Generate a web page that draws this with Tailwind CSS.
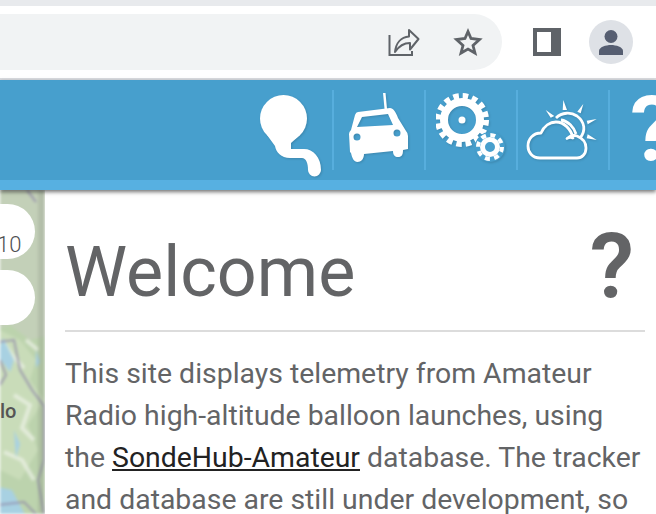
<!DOCTYPE html>
<html lang="en">
<head>
<meta charset="UTF-8">
<title>SondeHub Amateur</title>
<script src="https://cdn.jsdelivr.net/npm/@tailwindcss/browser@4"></script>
</head>
<body class="w-[656px] h-[514px] overflow-hidden bg-white font-['Roboto',sans-serif]">

<!-- Browser chrome -->
<div class="h-[6px] bg-[#e8eaed]"></div>
<div class="h-[72px] bg-white flex items-center">
  <div class="w-[502px] h-[56px] bg-[#f1f3f4] rounded-r-[28px] flex items-center justify-end pr-[19px] gap-[33px]">
    <svg class="w-[32px] h-[30px]" viewBox="388 27 32 30" fill="none" stroke="#5f6368" stroke-width="2"><path d="M389.500 35V55H412V51"/><path d="M395 52C396 43 401 37 409 36.500V30L418.500 39L410 49.500V43C404 43 399 46 395 52Z" stroke-linejoin="round"/></svg>
    <svg class="w-[30px] h-[30px]" viewBox="452.500 27 30 30" fill="none" stroke="#5f6368" stroke-width="2.800"><path d="M467.500 31.500L470.500 38.500L479 39.500L472.500 45.500L474.500 53L467.500 49L460.500 53L462.500 45.500L456 39.500L464.500 38.500Z"/></svg>
  </div>
  <div class="ml-[31px] w-[28px] h-[28px] border-[4px] border-r-[10px] border-[#5f6368] bg-white"></div>
  <div class="ml-[28px] w-[44px] h-[44px] rounded-full bg-[#dee1e6] flex items-center justify-center">
    <svg class="w-[26px] h-[26px]" viewBox="0 0 26 26" fill="#565e71"><circle cx="13" cy="7.500" r="6.500"/><path d="M1 26V22C1 18 8 16 13 16C18 16 25 18 25 22V26Z"/></svg>
  </div>
</div>
<div class="h-[2px] bg-[#dadce0]"></div>

<!-- Site header -->
<div class="relative z-10 shadow-[0_2px_4px_rgba(0,0,0,0.55)]">
  <div class="h-[100px] bg-[#479fcd] flex justify-end overflow-hidden">
    <div class="w-[92px] h-[100px] flex justify-end pr-[7px]">
      <svg class="w-[70px] h-[84px] mt-[13px] drop-shadow-[1px_1px_1px_rgba(0,0,0,0.15)]" viewBox="255 93 70 84" fill="#fff"><circle cx="283.500" cy="118.500" r="23.500"/><path d="M267 135L275 146C276 152 281 158 290 158H302C306 158 308 163 308 170A6.500 6.500 0 0 0 321 170C321 157 313 149 304 149H291V143L300 135Z"/></svg>
    </div>
    <div class="w-[2px] h-[80px] mt-[10px] bg-[#57aedd]"></div>
    <div class="w-[90px] h-[100px] flex pl-[11px]">
      <svg class="w-[66px] h-[75px] mt-[10px] drop-shadow-[1px_1px_1px_rgba(0,0,0,0.15)]" viewBox="345 90 66 75" fill="#fff"><path d="M383 93H385.500L387 109H384.500Z"/><path fill-rule="evenodd" d="M358 112L390 108C393 108 396 112 398 118L406 131Q408 133 408 136V149L403 150C403 156 401 157 398 157C395 157 393 155 393 151L364 154C364 159 361 162 357.500 162C354 162 352 158 351 153L350 152L349 134Q349 132 351 130L355 115Q356 112 358 112ZM362 117L357 127L393 125L388 114ZM353.500 137A3.500 3.500 0 1 0 360.500 137A3.500 3.500 0 1 0 353.500 137ZM393.500 133A3.500 3.500 0 1 0 400.500 133A3.500 3.500 0 1 0 393.500 133Z"/></svg>
    </div>
    <div class="w-[2px] h-[80px] mt-[10px] bg-[#57aedd]"></div>
    <div class="w-[90px] h-[100px] flex justify-center">
      <svg class="w-[70px] h-[70px] mt-[12px] drop-shadow-[1px_1px_1px_rgba(0,0,0,0.15)]" viewBox="0 0 70 70" fill="none" stroke="#fff">
        <circle cx="26" cy="28" r="18" stroke-width="8"/>
        <circle cx="26" cy="28" r="24" stroke-width="6" stroke-dasharray="5.500 3.925"/>
        <circle cx="26" cy="28" r="3.500" fill="#fff" stroke="none"/>
        <circle cx="54" cy="55" r="15" fill="#479fcd" stroke="none"/>
        <circle cx="54" cy="55" r="7.500" stroke-width="5"/>
        <circle cx="54" cy="55" r="12" stroke-width="4" stroke-dasharray="5 4.420"/>
      </svg>
    </div>
    <div class="w-[2px] h-[80px] mt-[10px] bg-[#57aedd]"></div>
    <div class="w-[90px] h-[100px] flex justify-center">
      <svg class="w-[80px] h-[70px] mt-[15px] drop-shadow-[1px_1px_1px_rgba(0,0,0,0.15)]" viewBox="523 95 80 70" fill="none" stroke="#fff" stroke-width="2.800">
        <path d="M540 158C532 158 528 152 528 146C528 139 533 133 541 133C544 126 550 122 556 122C564 122 571 129 573 138C571 137 569 137 567 138.500C570 136 574 135 577 136C582 138 586 142 586 148C586 154 582 158 577 158Z" stroke-linejoin="round"/>
        <path d="M556 118C562 112 571 112 577 116C585 122 586 131 580 138M561 120C568 121 574 127 576 134"/>
        <path d="M545.700 110L554.300 116L550.700 117.700ZM563.300 100L567 110L562.700 110ZM583.300 104L580.700 113.300L577.300 111.700ZM596.700 119L587.700 124.300L586.700 120.700ZM596.700 140L586.700 138.300L587.700 134.300Z" fill="#fff" stroke="none"/>
      </svg>
    </div>
    <div class="w-[2px] h-[80px] mt-[10px] bg-[#57aedd]"></div>
    <div class="w-[46px] h-[100px] overflow-hidden pl-[20px] pt-[2px]">
      <span class="block font-semibold text-[90px] leading-[96px] text-white">?</span>
    </div>
  </div>
  <div class="h-[10px] bg-[#57b0e1]"></div>
</div>

<!-- Page -->
<div class="flex h-[324px]">
  <div class="relative w-[45px] h-[324px] overflow-hidden shrink-0">
    <svg class="absolute inset-0 blur-[1.500px]" width="45" height="324" viewBox="0 0 45 324">
      <rect x="-5" y="-5" width="55" height="334" fill="#bcd3ad"/>
      <path d="M-5 -5H50V145L30 150L10 135L-5 140Z" fill="#c3d0b8"/>
      <path d="M0 140L20 150L36 170L30 190L44 210L28 235L38 260L20 290L0 280Z" fill="#c9dcb9"/>
      <path d="M2 150L12 165L24 178M14 205L30 215L22 238L34 250M4 262L22 270L34 290M26 150L38 160" fill="none" stroke="#eef2e8" stroke-width="4" opacity="0.700"/>
      <path d="M3 148L14 170L10 182L-3 165ZM-5 296L12 300L28 330H-5ZM14 240L20 254L16 268ZM36 160L40 172L36 178Z" fill="#a8d1e2"/>
      <path d="M27 0L36 12M-3 152L14 150L20 180L32 200L44 216L44 270L38 290L44 324M-3 315L24 312L36 324M0 170L6 185L0 195" fill="none" stroke="#8f88a8" stroke-width="1.500"/>
      <rect x="38" y="-5" width="12" height="334" fill="#555" opacity="0.150"/>
    </svg>
    <div class="absolute left-[-47px] top-[14px] w-[82px] h-[55px] rounded-full bg-white pl-[44px] pt-[26px] text-[22px] leading-[30px] font-light text-[#4f5052]">10</div>
    <div class="absolute left-[-47px] top-[80px] w-[82px] h-[55px] rounded-full bg-white"></div>
    <span class="absolute left-0 top-[209px] text-[20px] leading-[24px] font-medium text-[#555]">lo</span>
  </div>
  <div class="flex-1 bg-white pl-[20px] pr-[11px] text-[#636466]">
    <div class="h-[142px] border-b-2 border-[#dcdcdc] flex justify-between items-start">
      <h1 class="text-[70px] leading-[84px] mt-[40px] font-normal">Welcome</h1>
      <span class="font-semibold text-[90px] leading-[100px] mt-[27px] mr-[11px]">?</span>
    </div>
    <p class="mt-[21px] text-[28.400px] leading-[42px] whitespace-nowrap">This site displays telemetry from Amateur<br>Radio high-altitude balloon launches, using<br>the <a class="underline text-[#222]" href="#">SondeHub-Amateur</a> database. The tracker<br>and database are still under development, so</p>
  </div>
</div>
</body>
</html>
